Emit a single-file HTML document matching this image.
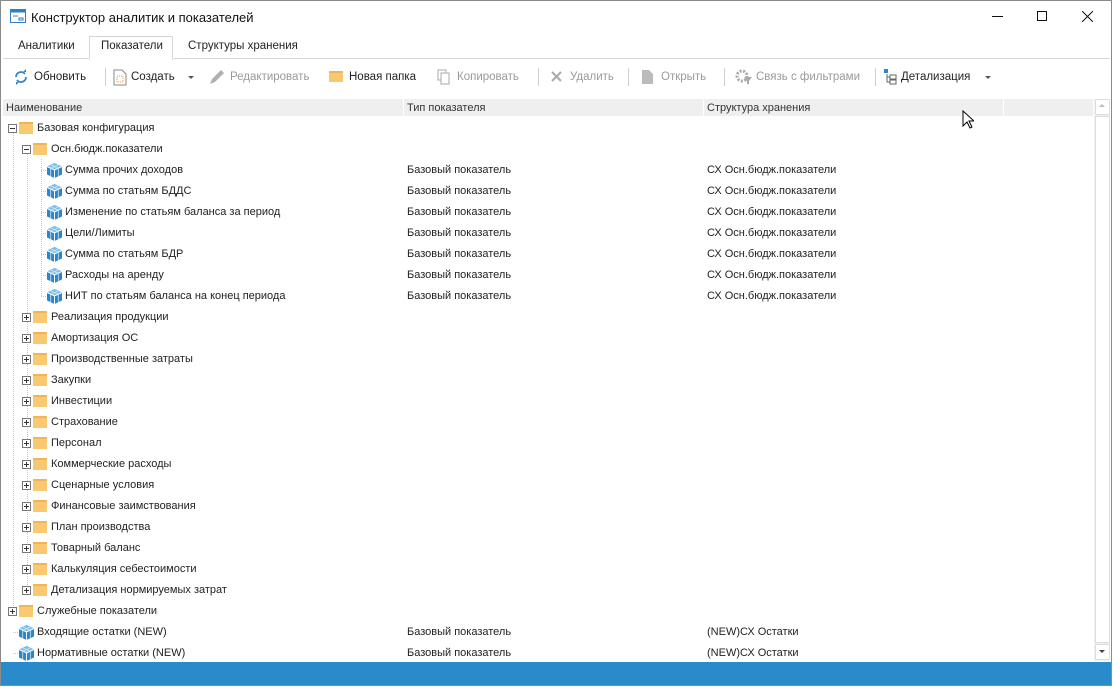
<!DOCTYPE html>
<html><head><meta charset="utf-8"><style>
*{margin:0;padding:0;box-sizing:border-box}
body{width:1113px;height:687px;background:#fff;font-family:"Liberation Sans",sans-serif;font-size:11px;color:#222;position:relative;overflow:hidden}
.a{position:absolute;white-space:nowrap}
.win{position:absolute;left:0;top:0;width:1112px;height:686px;border:1px solid #8a8a8a}
.tb{color:#222;font-size:11.5px}
.dis{color:#9a9a9a}
.sep{position:absolute;top:68px;width:1px;height:18px;background:#d0d0d0}
.row{position:absolute;left:0;height:21px;line-height:21px;width:1093px}
.exp{position:absolute;width:9px;height:9px;border:1px solid #777;background:#fff;top:6px}
.exp:before{content:"";position:absolute;left:1px;top:3px;width:5px;height:1px;background:#333}
.exp.p:after{content:"";position:absolute;left:3px;top:1px;width:1px;height:5px;background:#333}
.fold{position:absolute;top:4px;width:14px;height:12px;background:#f9c870;border-top:2px solid #f0b555}
.cube{position:absolute;top:2px}
.vl{position:absolute;width:1px;border-left:1px dotted #c8c8c8}
.hl{position:absolute;height:1px;border-top:1px dotted #c8c8c8}
</style></head><body>
<div class="win"></div>
<svg class="a" style="left:10px;top:9px" width="16" height="14"><rect x="0.5" y="0.5" width="15" height="13" fill="#fff" stroke="#2f7fc4"/><rect x="0.5" y="0.5" width="15" height="3" fill="#2f7fc4"/><line x1="3" y1="7" x2="8" y2="7" stroke="#2f7fc4"/><rect x="9" y="9" width="4" height="2" fill="none" stroke="#2f7fc4"/></svg>
<div class="a" style="left:31px;top:10px;font-size:13px;color:#111">Конструктор аналитик и показателей</div>
<div class="a" style="left:992px;top:16px;width:11px;height:1px;background:#111"></div>
<div class="a" style="left:1037px;top:11px;width:10px;height:10px;border:1px solid #111"></div>
<svg class="a" style="left:1082px;top:11px" width="11" height="11"><path d="M0 0L11 11M11 0L0 11" stroke="#111"/></svg>
<div class="a" style="left:89px;top:36px;width:84px;height:24px;border:1px solid #d6d6d6;border-bottom:none;background:#fff"></div>
<div class="a" style="left:3px;top:58px;width:1107px;height:1px;background:#d6d6d6"></div>
<div class="a" style="left:89px;top:58px;width:84px;height:1px;background:#fff"></div>
<div class="a tb" style="left:18px;top:40px">Аналитики</div>
<div class="a tb" style="left:101px;top:40px">Показатели</div>
<div class="a tb" style="left:188px;top:40px">Структуры хранения</div>
<svg class="a" style="left:13px;top:69px" width="16" height="16"><path d="M3 8a5 5 0 0 1 9-3M13 8a5 5 0 0 1-9 3" fill="none" stroke="#2f86cf" stroke-width="1.8"/><path d="M10 3l3 0 0-3z M6 13l-3 0 0 3z" fill="#2f86cf"/></svg>
<div class="a tb" style="left:34px;top:71px">Обновить</div>
<div class="sep" style="left:105px"></div>
<svg class="a" style="left:113px;top:69px" width="14" height="17"><path d="M1 1h8l4 4v11H1z" fill="#fff" stroke="#888"/><rect x="4" y="7" width="6" height="6" fill="none" stroke="#e8a030" stroke-dasharray="1 1"/></svg>
<div class="a tb" style="left:131px;top:71px">Создать</div>
<div class="a" style="left:188px;top:76px;border:3px solid transparent;border-top:3px solid #555"></div>
<svg class="a" style="left:208px;top:69px" width="18" height="17"><path d="M2 15l2-5 9-9 3 3-9 9z" fill="#b0b0b0"/></svg>
<div class="a tb dis" style="left:230px;top:71px">Редактировать</div>
<div class="a" style="left:329px;top:71px;width:14px;height:11px;background:#f9c870;border-top:2px solid #f0b555"></div>
<div class="a tb" style="left:349px;top:71px">Новая папка</div>
<svg class="a" style="left:437px;top:69px" width="14" height="16"><rect x="1" y="1" width="8" height="10" fill="#fff" stroke="#aaa"/><rect x="4" y="4" width="8" height="11" fill="#fff" stroke="#aaa"/></svg>
<div class="a tb dis" style="left:457px;top:71px">Копировать</div>
<div class="sep" style="left:538px"></div>
<svg class="a" style="left:551px;top:71px" width="11" height="11"><path d="M1 1L10 10M10 1L1 10" stroke="#aaa" stroke-width="2"/></svg>
<div class="a tb dis" style="left:570px;top:71px">Удалить</div>
<div class="sep" style="left:628px"></div>
<svg class="a" style="left:641px;top:69px" width="13" height="16"><path d="M1 1h7l4 4v10H1z" fill="#bbb"/></svg>
<div class="a tb dis" style="left:661px;top:71px">Открыть</div>
<div class="sep" style="left:724px"></div>
<svg class="a" style="left:735px;top:69px" width="18" height="16"><circle cx="7" cy="7" r="5" fill="none" stroke="#aaa" stroke-width="3" stroke-dasharray="2 1.5"/><path d="M9 8h8l-3 4v3h-2v-3z" fill="#aaa"/></svg>
<div class="a tb dis" style="left:756px;top:71px">Связь с фильтрами</div>
<div class="sep" style="left:875px"></div>
<svg class="a" style="left:883px;top:68px" width="16" height="17"><rect x="1" y="1" width="4" height="4" fill="#2f86cf"/><path d="M4 6v8h3M4 9h3" fill="none" stroke="#666"/><rect x="7" y="7" width="6" height="4" fill="none" stroke="#666"/><rect x="7" y="12" width="6" height="4" fill="none" stroke="#666"/></svg>
<div class="a tb" style="left:901px;top:71px">Детализация</div>
<div class="a" style="left:985px;top:76px;border:3px solid transparent;border-top:3px solid #555"></div>
<div class="a" style="left:3px;top:99px;width:1090px;height:17px;background:#efefef"></div>
<div class="a" style="left:403px;top:99px;width:1px;height:17px;background:#fff"></div>
<div class="a" style="left:703px;top:99px;width:1px;height:17px;background:#fff"></div>
<div class="a" style="left:1003px;top:99px;width:1px;height:17px;background:#fff"></div>
<div class="a" style="left:6px;top:102px;color:#333">Наименование</div>
<div class="a" style="left:407px;top:102px;color:#333">Тип показателя</div>
<div class="a" style="left:707px;top:102px;color:#333">Структура хранения</div>
<svg class="a" style="left:962px;top:110px" width="12" height="19"><path d="M1 1v15l4-4 3 6 2-1-3-6h5z" fill="#fff" stroke="#000"/></svg>
<div class="a" style="left:1094px;top:99px;width:16px;height:562px;background:#f0f0f0"></div>
<div class="a" style="left:1095px;top:99px;width:15px;height:16px;background:#fff;border:1px solid #ddd;border-radius:2px"></div>
<div class="a" style="left:1099px;top:104px;border:3px solid transparent;border-bottom:3px solid #bbb;border-top:none"></div>
<div class="a" style="left:1095px;top:116px;width:15px;height:527px;background:#fff;border:1px solid #ddd"></div>
<div class="a" style="left:1095px;top:644px;width:15px;height:16px;background:#fff;border:1px solid #ddd;border-radius:2px"></div>
<div class="a" style="left:1099px;top:650px;border:3px solid transparent;border-top:3px solid #444;border-bottom:none"></div>
<div class="a" style="left:1px;top:662px;width:1110px;height:23px;background:#2a8bcb"></div>
<div class="vl" style="left:13px;top:133px;height:473px"></div>
<div class="vl" style="left:27px;top:154px;height:431px"></div>
<div class="vl" style="left:41px;top:159px;height:137px"></div>
<div id="t"></div>
<script>
var cube='<svg width="17" height="17" viewBox="0 0 17 17"><path d="M8.5 1L16 4.5v8L8.5 16 1 12.5v-8z" fill="#2d84c8"/><path d="M1 4.5L8.5 8 16 4.5 8.5 1z" fill="#7cc0ee"/><path d="M8.5 8v8" stroke="#fff" stroke-width="1"/><path d="M1 4.5L8.5 8 16 4.5" fill="none" stroke="#fff" stroke-width="1"/><path d="M4.7 2.8L12.2 6.3M12.3 2.8L4.8 6.3M4.7 6.3v8M12.3 6.3v8" stroke="#cfe8fa" stroke-width=".8"/></svg>';
var rows=[
[0,'f','m','Базовая конфигурация'],
[1,'f','m','Осн.бюдж.показатели'],
[2,'c','','Сумма прочих доходов',1],
[2,'c','','Сумма по статьям БДДС',1],
[2,'c','','Изменение по статьям баланса за период',1],
[2,'c','','Цели/Лимиты',1],
[2,'c','','Сумма по статьям БДР',1],
[2,'c','','Расходы на аренду',1],
[2,'c','','НИТ по статьям баланса на конец периода',1],
[1,'f','p','Реализация продукции'],
[1,'f','p','Амортизация ОС'],
[1,'f','p','Производственные затраты'],
[1,'f','p','Закупки'],
[1,'f','p','Инвестиции'],
[1,'f','p','Страхование'],
[1,'f','p','Персонал'],
[1,'f','p','Коммерческие расходы'],
[1,'f','p','Сценарные условия'],
[1,'f','p','Финансовые заимствования'],
[1,'f','p','План производства'],
[1,'f','p','Товарный баланс'],
[1,'f','p','Калькуляция себестоимости'],
[1,'f','p','Детализация нормируемых затрат'],
[0,'f','p','Служебные показатели'],
[0,'c','','Входящие остатки (NEW)',2],
[0,'c','','Нормативные остатки (NEW)',2]];
var h='';
rows.forEach(function(r,i){
 var top=118+21*i, L=r[0], x=8+14*L;
 h+='<div class="row" style="top:'+top+'px">';
 if(r[1]=='f'){
  h+='<div class="exp '+(r[2]=='p'?'p':'')+'" style="left:'+x+'px"></div>';
  h+='<div class="fold" style="left:'+(x+11)+'px"></div>';
  h+='<div class="a" style="left:'+(x+29)+'px;top:0">'+r[3]+'</div>';
 } else {
  var cx = L==2?46:18;
  h+='<div class="hl" style="left:'+(cx-5)+'px;top:10px;width:5px"></div>';
  h+='<div class="cube a" style="left:'+cx+'px">'+cube+'</div>';
  h+='<div class="a" style="left:'+(cx+19)+'px;top:0">'+r[3]+'</div>';
  h+='<div class="a" style="left:407px;top:0">Базовый показатель</div>';
  h+='<div class="a" style="left:707px;top:0">'+(r[4]==1?'СХ Осн.бюдж.показатели':'(NEW)СХ Остатки')+'</div>';
 }
 h+='</div>';
});
document.getElementById('t').innerHTML=h;
</script>
</body></html>
